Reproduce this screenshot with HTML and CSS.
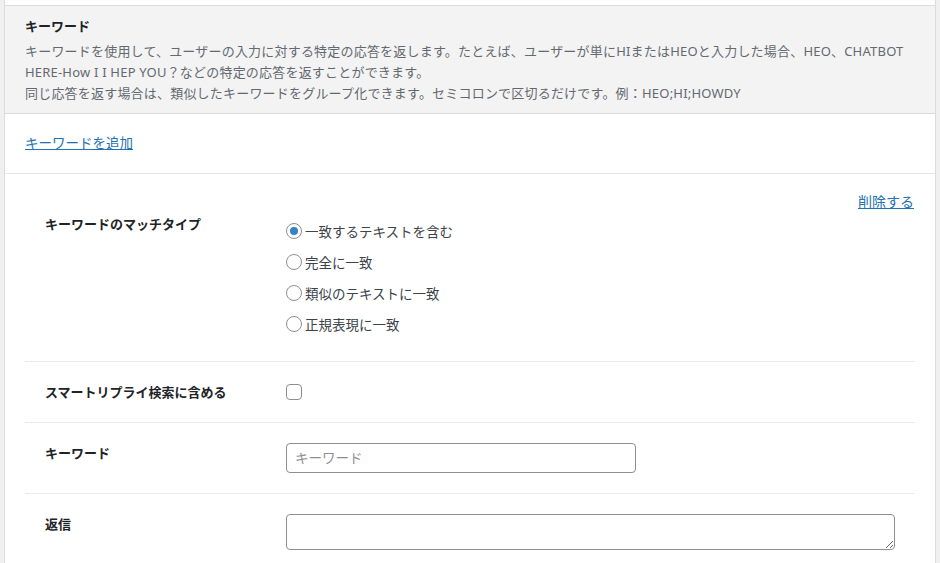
FILE: index.html
```html
<!DOCTYPE html>
<html lang="ja">
<head>
<meta charset="utf-8">
<title>キーワード</title>
<link rel="stylesheet" href="styles.css">
</head>
<body>
<div class="page">
  <div class="panel">
    <div class="top-strip"></div>
    <div class="section-head">
      <h3 class="section-title">キーワード</h3>
      <p class="desc">キーワードを使用して、ユーザーの入力に対する特定の応答を返します。たとえば、ユーザーが単にHIまたはHEOと入力した場合、HEO、CHATBOT<br>HERE-How I I HEP YOU？などの特定の応答を返すことができます。<br>同じ応答を返す場合は、類似したキーワードをグループ化できます。セミコロンで区切るだけです。例：HEO;HI;HOWDY</p>
    </div>
    <div class="add-row"><a href="#" class="link">キーワードを追加</a></div>
    <div class="kw-block">
      <div class="delete-row"><a href="#" class="link link-delete">削除する</a></div>
      <div class="form-table">
        <div class="row row-match">
          <div class="th th-match">キーワードのマッチタイプ</div>
          <div class="td options">
            <label class="option"><input type="radio" name="match" class="radio" checked><span>一致するテキストを含む</span></label>
            <label class="option"><input type="radio" name="match" class="radio"><span>完全に一致</span></label>
            <label class="option"><input type="radio" name="match" class="radio"><span>類似のテキストに一致</span></label>
            <label class="option"><input type="radio" name="match" class="radio"><span>正規表現に一致</span></label>
          </div>
        </div>
        <div class="row row-center">
          <div class="th">スマートリプライ検索に含める</div>
          <div class="td"><input type="checkbox" class="checkbox"></div>
        </div>
        <div class="row">
          <div class="th">キーワード</div>
          <div class="td"><input type="text" class="text-input" placeholder="キーワード"></div>
        </div>
        <div class="row row-last">
          <div class="th">返信</div>
          <div class="td"><textarea class="textarea"></textarea></div>
        </div>
      </div>
    </div>
  </div>
</div>
</body>
</html>
```
FILE: styles.css
```css
* { box-sizing: border-box; }

html, body {
  margin: 0;
  padding: 0;
  background: #f0f0f1;
  font-family: "Noto Sans", "Noto Sans CJK JP", sans-serif;
  color: #3c434a;
}

.page {
  padding: 0 4px;
  height: 563px;
  overflow: hidden;
}

.panel {
  background: #fff;
  border-left: 1px solid #dcdcde;
  border-right: 1px solid #dcdcde;
  min-height: 563px;
}

.top-strip {
  height: 5px;
  background: #fff;
}

.section-head {
  background: #f3f3f3;
  border-top: 1px solid #dcdcde;
  border-bottom: 1px solid #dcdcde;
  padding: 10px 20px 10px;
}

.section-title {
  margin: 0 0 5px;
  font-size: 13px;
  line-height: 20px;
  font-weight: 700;
  color: #1d2327;
}

.desc {
  margin: 0;
  font-size: 13px;
  line-height: 20.75px;
  letter-spacing: 0.2px;
  color: #646970;
}

.add-row {
  padding: 18px 20px 20px;
  line-height: 20px;
  border-bottom: 1px solid #e6e6e6;
}

.link {
  color: #2271b1;
  text-decoration: underline;
  font-size: 13.5px;
}

.link-delete {
  font-size: 14px;
}

.kw-block {
  padding: 0 20px;
}

.delete-row {
  display: flex;
  justify-content: flex-end;
  padding-top: 18px;
  padding-right: 1px;
  line-height: 20px;
}

.row {
  display: grid;
  grid-template-columns: 261px 1fr;
  padding: 20px 0;
  border-bottom: 1px solid #ebebeb;
}

.row-match {
  padding: 0 0 22px;
}

.row-center {
  align-items: center;
}

.row-last {
  border-bottom: none;
}

.th {
  padding-left: 20px;
  font-size: 13px;
  line-height: 20px;
  font-weight: 700;
  color: #1d2327;
}

.th-match {
  padding-top: 2px;
}

.td {
  display: flex;
  align-items: flex-start;
}

.options {
  flex-direction: column;
  padding-top: 3px;
}

.option {
  display: flex;
  align-items: center;
  gap: 3px;
  height: 31px;
  font-size: 13.5px;
  color: #3c434a;
}

.radio {
  appearance: none;
  -webkit-appearance: none;
  margin: 0;
  width: 16px;
  height: 16px;
  border: 1px solid #8c8f94;
  border-radius: 50%;
  background: #fff;
  display: inline-flex;
  align-items: center;
  justify-content: center;
  flex: none;
}

.radio:checked::before {
  content: "";
  width: 8px;
  height: 8px;
  border-radius: 50%;
  background: #3582c4;
}

.checkbox {
  appearance: none;
  -webkit-appearance: none;
  margin: 0;
  width: 16px;
  height: 16px;
  border: 1px solid #8c8f94;
  border-radius: 4px;
  background: #fff;
}

.text-input {
  width: 350px;
  height: 30px;
  margin: 0;
  padding: 0 8px;
  border: 1px solid #8c8f94;
  border-radius: 4px;
  font-family: "Noto Sans", "Noto Sans CJK JP", sans-serif;
  font-size: 13.5px;
  color: #2c3338;
}

.text-input::placeholder {
  color: #8c8f94;
}

.textarea {
  width: 609px;
  height: 36px;
  margin: 0;
  padding: 2px 6px;
  border: 1px solid #8c8f94;
  border-radius: 4px;
  font-family: "Noto Sans", "Noto Sans CJK JP", sans-serif;
  font-size: 14px;
  display: block;
}
```
